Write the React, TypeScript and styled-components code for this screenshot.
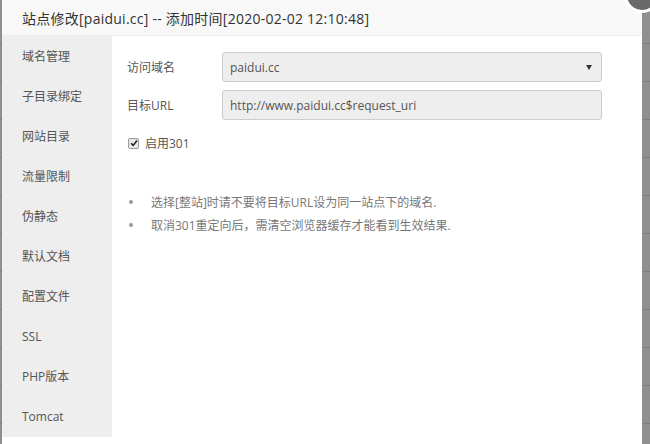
import React from "react";
import styled, { createGlobalStyle } from "styled-components";

const Global = createGlobalStyle`
  html, body { margin: 0; padding: 0; }
  body {
    width: 650px; height: 444px; overflow: hidden;
    background: #8f8f8f;
    font-family: "Open Sans", "Noto Sans CJK SC", sans-serif;
  }
`;

const Page = styled.div`
  position: relative;
  width: 650px;
  height: 444px;
  display: flex;
  padding-left: 2px;
  box-sizing: border-box;
  background:
    repeating-linear-gradient(to bottom, transparent 0 37px, #7d7d7d 37px 38px) 0 6px / 100% 100%,
    #8f8f8f;
`;

const Dialog = styled.div`
  width: 640px;
  height: 444px;
  background: #fff;
  display: flex;
  flex-direction: column;
`;

const TitleBar = styled.div`
  height: 35px;
  flex: none;
  background: #f8f8f8;
  border-bottom: 1px solid #eee;
  padding-left: 20px;
  display: flex;
  align-items: center;
  font-size: 14px;
  letter-spacing: 0.25px;
  color: #333;
`;

const CloseBtn = styled.div`
  position: absolute;
  left: 624px;
  top: -23px;
  width: 30px;
  height: 30px;
  border-radius: 50%;
  background: #6a6a6a;
  border: 3px solid #fff;
`;

const Body = styled.div`
  display: flex;
  flex: 1;
`;

const Side = styled.div`
  width: 110px;
  height: 400px;
  padding-top: 1px;
  box-sizing: content-box;
  background: #eee;
  display: flex;
  flex-direction: column;
`;

const SideItem = styled.div`
  height: 40px;
  line-height: 40px;
  padding-left: 20px;
  font-size: 12px;
  color: #555;
`;

const Main = styled.div`
  flex: 1;
  padding: 16px 40px 0 15px;
`;

const Row = styled.div`
  display: flex;
  align-items: center;
  margin-bottom: 8px;
`;

const Label = styled.div`
  width: 95px;
  font-size: 12px;
  color: #555;
`;

const Field = styled.div`
  height: 28px;
  border: 1px solid #ccc;
  border-radius: 3px;
  background: #eee;
  display: flex;
  align-items: center;
  justify-content: space-between;
  padding: 0 8px 0 7px;
  font-size: 12px;
  color: #555;
  width: 363px;
`;

const Arrow = styled.span`
  width: 0;
  height: 0;
  border-left: 3px solid transparent;
  border-right: 3px solid transparent;
  border-top: 5px solid #333;
  margin-right: 1px;
`;

const CheckRow = styled.label`
  display: flex;
  align-items: center;
  gap: 6px;
  margin-top: 14px;
  font-size: 12px;
  color: #555;
`;

const Box = styled.span`
  width: 9px;
  height: 9px;
  border: 1px solid #999;
  border-radius: 2px;
  background: #e8e8e8;
  display: flex;
  align-items: center;
  justify-content: center;
  margin-left: 1px;
`;

const Tips = styled.ul`
  margin: 38px 0 0 0;
  padding: 0;
  list-style: none;
`;

const Tip = styled.li`
  display: flex;
  align-items: center;
  height: 23px;
  font-size: 12px;
  color: #777;
  &::before {
    content: "";
    width: 4px;
    height: 4px;
    border-radius: 50%;
    background: #999;
    margin: 0 18px 0 2px;
  }
`;

const items = ["域名管理", "子目录绑定", "网站目录", "流量限制", "伪静态", "默认文档", "配置文件", "SSL", "PHP版本", "Tomcat"];

export default function App() {
  return (
    <>
      <Global />
      <Page>
        <Dialog>
          <TitleBar>站点修改[paidui.cc] -- 添加时间[2020-02-02 12:10:48]</TitleBar>
          <Body>
            <Side>
              {items.map((t) => (
                <SideItem key={t}>{t}</SideItem>
              ))}
            </Side>
            <Main>
              <Row>
                <Label>访问域名</Label>
                <Field>
                  <span>paidui.cc</span>
                  <Arrow />
                </Field>
              </Row>
              <Row>
                <Label>目标URL</Label>
                <Field>
                  <span>http://www.paidui.cc$request_uri</span>
                </Field>
              </Row>
              <CheckRow>
                <Box>
                  <svg width="8" height="8" viewBox="0 0 8 8">
                    <path d="M1 4.2 L3.2 6.4 L7 1.4" fill="none" stroke="#222" strokeWidth="1.6" />
                  </svg>
                </Box>
                启用301
              </CheckRow>
              <Tips>
                <Tip>选择[整站]时请不要将目标URL设为同一站点下的域名.</Tip>
                <Tip>取消301重定向后，需清空浏览器缓存才能看到生效结果.</Tip>
              </Tips>
            </Main>
          </Body>
        </Dialog>
        <CloseBtn />
      </Page>
    </>
  );
}
